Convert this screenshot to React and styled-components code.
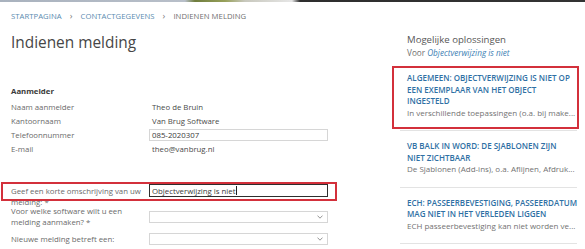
import React from 'react';
import styled, { createGlobalStyle } from 'styled-components';

const Global = createGlobalStyle`
  html, body { margin: 0; padding: 0; background: #fff; }
  body { font-family: "Open Sans", "Noto Sans", sans-serif; color: #555; }
  * { box-sizing: border-box; }
`;

const Page = styled.div`
  width: 585px;
  height: 249px;
  overflow: hidden;
  background: #fff;
`;

const TopStrip = styled.div`
  height: 2px;
  background: linear-gradient(90deg, #a9b2be 0, #b8bfc9 185px, #6f7d3e 195px, #97a05a 225px, #c8c8bd 245px, #e6e6e6 292px, #2e2e2e 300px, #333 100%);
`;

const Layout = styled.div`
  display: flex;
  padding-top: 8px;
`;

const Main = styled.main`
  width: 400px;
  flex: none;
  padding-left: 11px;
`;

const Breadcrumb = styled.nav`
  display: flex;
  align-items: center;
  gap: 8px;
  font-size: 7.7px;
  line-height: 12px;
  text-transform: uppercase;
  letter-spacing: 0.05px;
`;

const Crumb = styled.span`
  color: ${p => (p.$current ? '#6f6f6f' : '#5b8cb0')};
`;

const CrumbSep = styled.span`
  color: #7a7a7a;
  font-size: 9px;
`;

const Title = styled.h1`
  margin: 11px 0 0;
  font-size: 15.4px;
  line-height: 20px;
  font-weight: 400;
  color: #464646;
`;

const Section = styled.section`
  margin-top: 31px;
`;

const SectionTitle = styled.h2`
  margin: 0 0 2px;
  font-size: 7.8px;
  line-height: 14px;
  font-weight: 700;
  color: #3a3a3a;
`;

const InfoRow = styled.div`
  display: grid;
  grid-template-columns: 138px 179px;
  align-items: center;
  height: 14px;
  font-size: 7.8px;
  line-height: 14px;
`;

const Label = styled.span`
  color: #6a6a6a;
  line-height: ${p => p.$lh || '14px'};
  padding-top: ${p => p.$pt || 0};
`;

const Value = styled.span`
  color: #4a4a4a;
  padding-left: 3px;
`;

const TextInput = styled.div`
  height: ${p => (p.$focused ? '13px' : '12px')};
  border: ${p => (p.$focused ? '1.5px solid #2e2e2e' : '1px solid #d6d6d6')};
  padding-left: 2px;
  display: flex;
  align-items: center;
  color: #3a3a3a;
  font-size: 7.8px;
  background: #fff;
`;

const Caret = styled.span`
  display: inline-block;
  width: 1px;
  height: 9px;
  background: #222;
  margin-left: 0.5px;
`;

const SelectBox = styled.div`
  height: 12px;
  border: 1px solid #d6d6d6;
  display: flex;
  align-items: center;
  justify-content: flex-end;
  padding-right: 4px;
  background: #fff;
`;

const Form = styled.div`
  margin-top: 28px;
  display: flex;
  flex-direction: column;
  gap: 5px;
`;

const FormRow = styled.div`
  position: relative;
  display: grid;
  grid-template-columns: 138px 179px;
  align-items: ${p => (p.$fixed ? 'start' : 'center')};
  height: ${p => (p.$fixed ? p.$fixed : 'auto')};
  font-size: 7.8px;
`;

const Highlight = styled.div`
  position: absolute;
  border: 2px solid #d3303b;
  pointer-events: none;
  top: ${p => p.$top}px;
  left: ${p => p.$left}px;
  width: ${p => p.$w}px;
  height: ${p => p.$h}px;
`;

const Aside = styled.aside`
  width: 177px;
  flex: none;
  padding-top: 23px;
`;

const AsideTitle = styled.h3`
  margin: 0;
  padding-left: 7px;
  font-size: 9.6px;
  line-height: 14px;
  font-weight: 400;
  color: #575757;
`;

const AsideSub = styled.p`
  margin: 0;
  padding-left: 7px;
  font-size: 8.2px;
  line-height: 12px;
  color: #707070;
`;

const Em = styled.em`
  color: #3e7fb4;
`;

const List = styled.ul`
  list-style: none;
  margin: 4px 0 0;
  padding: 0;
`;

const Item = styled.li`
  position: relative;
  padding: 9px 7px 12px;
  border-bottom: 1px solid #e3e3e3;
`;

const ItemTitle = styled.div`
  font-size: 8px;
  line-height: 11.5px;
  font-weight: 600;
  color: #2f70a4;
  text-transform: uppercase;
  white-space: nowrap;
`;

const ItemDesc = styled.div`
  font-size: 8px;
  line-height: 11.5px;
  color: #727272;
  white-space: nowrap;
`;

const Chevron = () => (
  <svg width="6" height="4" viewBox="0 0 6 4">
    <polyline points="0.5,0.6 3,3.2 5.5,0.6" fill="none" stroke="#8a8a8a" strokeWidth="0.9" />
  </svg>
);

const contact = [
  ['Naam aanmelder', 'Theo de Bruin'],
  ['Kantoornaam', 'Van Brug Software'],
  ['Telefoonnummer', '085-2020307', true],
  ['E-mail', 'theo@vanbrug.nl'],
];

const solutions = [
  {
    title: ['Algemeen: Objectverwijzing is niet op', 'een exemplaar van het object', 'ingesteld'],
    desc: 'In verschillende toepassingen (o.a. bij make...',
    highlighted: true,
  },
  {
    title: ['VB balk in Word: De sjablonen zijn', 'niet zichtbaar'],
    desc: 'De Sjablonen (Add-ins), o.a. Aflijnen, Afdruk...',
  },
  {
    title: ['ECH: passeerbevestiging, passeerdatum', 'mag niet in het verleden liggen'],
    desc: 'ECH passeerbevestiging kan niet worden ve...',
  },
];

export default function App() {
  return (
    <Page>
      <Global />
      <TopStrip />
      <Layout>
        <Main>
          <Breadcrumb>
            <Crumb>Startpagina</Crumb>
            <CrumbSep>›</CrumbSep>
            <Crumb>Contactgegevens</Crumb>
            <CrumbSep>›</CrumbSep>
            <Crumb $current>Indienen melding</Crumb>
          </Breadcrumb>
          <Title>Indienen melding</Title>
          <Section>
            <SectionTitle>Aanmelder</SectionTitle>
            {contact.map(([label, value, input]) => (
              <InfoRow key={label}>
                <Label>{label}</Label>
                {input ? <TextInput>{value}</TextInput> : <Value>{value}</Value>}
              </InfoRow>
            ))}
          </Section>
          <Form>
            <FormRow $fixed="17px">
              <Label $lh="11px" $pt="2px">Geef een korte omschrijving van uw melding: *</Label>
              <TextInput $focused>
                Objectverwijzing is niet<Caret />
              </TextInput>
              <Highlight $top={-2} $left={-10} $w={336} $h={19} />
            </FormRow>
            <FormRow>
              <Label $lh="11px">Voor welke software wilt u een melding aanmaken? *</Label>
              <SelectBox><Chevron /></SelectBox>
            </FormRow>
            <FormRow>
              <Label $lh="11px">Nieuwe melding betreft een:</Label>
              <SelectBox><Chevron /></SelectBox>
            </FormRow>
          </Form>
        </Main>
        <Aside>
          <AsideTitle>Mogelijke oplossingen</AsideTitle>
          <AsideSub>
            Voor <Em>Objectverwijzing is niet</Em>
          </AsideSub>
          <List>
            {solutions.map((s, i) => (
              <Item key={i}>
                {s.title.map(line => (
                  <ItemTitle key={line}>{line}</ItemTitle>
                ))}
                <ItemDesc>{s.desc}</ItemDesc>
                {s.highlighted && <Highlight $top={3} $left={-8} $w={187} $h={63} />}
              </Item>
            ))}
          </List>
        </Aside>
      </Layout>
    </Page>
  );
}
